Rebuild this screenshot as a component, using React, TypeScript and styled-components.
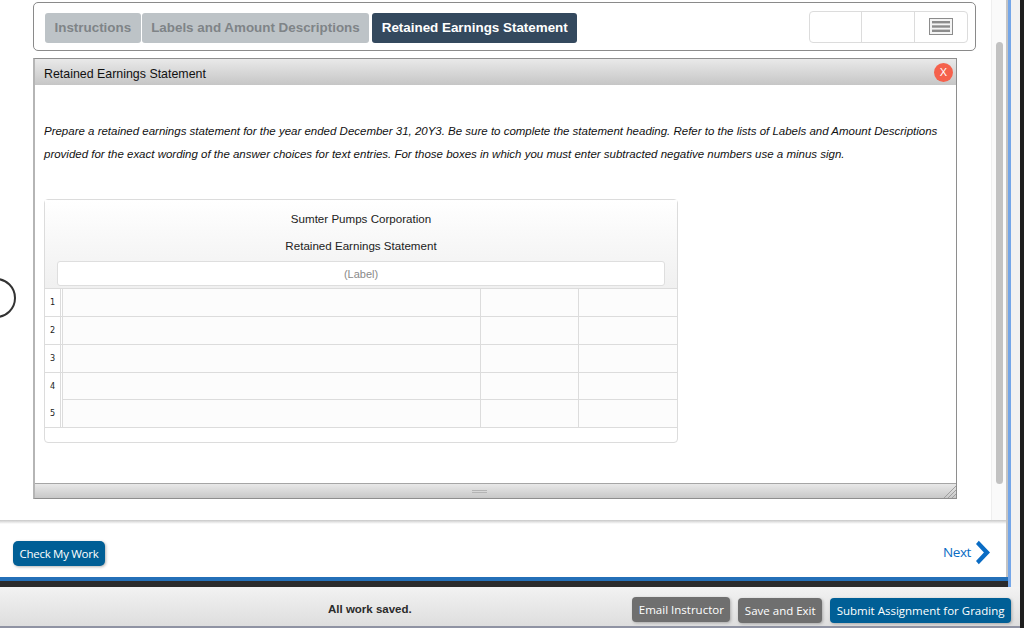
import styled, { createGlobalStyle } from 'styled-components';

const GlobalStyle = createGlobalStyle`
  html, body {
    margin: 0;
    padding: 0;
    overflow: hidden;
    background: #1e1e1e;
  }
  * {
    box-sizing: border-box;
  }
`;

const Page = styled.div`
  position: relative;
  display: flex;
  width: 1024px;
  height: 628px;
  overflow: hidden;
  background: #1e1e1e;
  font-family: 'Liberation Sans', Arial, sans-serif;
`;

const Frame = styled.div`
  display: flex;
  flex-direction: column;
  width: 1020px;
  height: 628px;
  background: #f1f1f1;
`;

const Shell = styled.div`
  display: flex;
  flex-direction: column;
  width: 1011px;
  height: 587px;
  border-right: 3px solid #74a6e8;
  background: #fff;
`;

const Main = styled.div`
  display: flex;
  height: 520px;
  border-right: 2px solid #c4c4c4;
`;

const Content = styled.div`
  width: 991px;
  padding: 2px 15px 0 33px;
`;

const Track = styled.div`
  width: 15px;
  padding: 42px 3px 36px 4px;
  background: #fafafa;
  border-left: 1px solid #efefef;
`;

const Thumb = styled.div`
  height: 442px;
  border-radius: 4px;
  background: #c2c2c2;
`;

const TabPanel = styled.div`
  display: flex;
  align-items: center;
  justify-content: space-between;
  height: 49px;
  padding: 0 7px 0 11px;
  border: 1px solid #8a8a8a;
  border-radius: 5px;
`;

const Tabs = styled.div`
  display: flex;
  gap: 1px;
  margin-top: 2px;
`;

const Tab = styled.div<{ $active?: boolean }>`
  height: 30px;
  padding: 0 9.5px;
  border-radius: 3px;
  background: ${(p) => (p.$active ? '#34495e' : '#bdc3c7')};
  color: ${(p) => (p.$active ? '#fff' : '#7f8487')};
  font-size: 13.4px;
  font-weight: 700;
  line-height: 30px;
  margin-left: ${(p) => (p.$active ? '2px' : '0')};
`;

const ToolGroup = styled.div`
  display: grid;
  grid-template-columns: 52px 53px 1fr;
  width: 159px;
  height: 32px;
  border: 1px solid #dcdcdc;
  border-radius: 4px;
`;

const ToolCell = styled.div<{ $last?: boolean }>`
  display: flex;
  align-items: center;
  justify-content: center;
  border-right: ${(p) => (p.$last ? 'none' : '1px solid #dcdcdc')};
`;

const Window = styled.div`
  display: flex;
  flex-direction: column;
  width: 924px;
  height: 441px;
  margin-top: 7px;
  border: 1px solid #8e8e8e;
  border-left-width: 2px;
  border-left-color: #b5b5b5;
`;

const TitleBar = styled.div`
  display: flex;
  align-items: center;
  justify-content: space-between;
  height: 26px;
  padding: 4px 3px 0 9px;
  background: linear-gradient(#e9e9e9, #c6c6c6);
  font-size: 12.4px;
  color: #111;
`;

const CloseButton = styled.div`
  width: 19px;
  height: 19px;
  margin-top: -4px;
  border-radius: 50%;
  background: #f5614c;
  color: #fff;
  font-size: 11px;
  line-height: 19px;
  text-align: center;
`;

const WindowBody = styled.div`
  flex: 1;
  padding: 35px 9px 0;
`;

const Instructions = styled.p`
  margin: 0;
  font-size: 11.49px;
  font-style: italic;
  line-height: 23px;
  color: #111;
`;

const Card = styled.div`
  width: 634px;
  height: 244px;
  margin-top: 33px;
  border: 1px solid #dcdcdc;
  border-radius: 4px;
`;

const CardHead = styled.div`
  height: 88px;
  padding: 6px 12px 0;
  background: linear-gradient(#fff, #f0f0f0);
  text-align: center;
`;

const HeadLine = styled.div`
  height: 27px;
  font-size: 11.58px;
  line-height: 26px;
  color: #222;
`;

const LabelBox = styled.div`
  height: 25px;
  margin-top: 1px;
  border: 1px solid #dedede;
  border-radius: 3px;
  background: #fff;
  color: #8a8a8a;
  font-size: 11px;
  line-height: 24px;
`;

const Row = styled.div<{ $short?: boolean }>`
  display: grid;
  grid-template-columns: 15px 3px 418px 98px 1fr;
  height: ${(p) => (p.$short ? '27px' : '28px')};
  border-top: 1px solid #dcdcdc;
  background: #fcfcfc;
`;

const RowNumber = styled.div`
  padding-left: 5px;
  font-family: 'DejaVu Sans', sans-serif;
  font-size: 9px;
  font-stretch: condensed;
  line-height: 27px;
  color: #222;
  background: #fff;
`;

const Gutter = styled.div`
  border-left: 1px solid #dcdcdc;
  border-right: 1px solid #dcdcdc;
  background: #fff;
`;

const Cell = styled.div`
  border-right: 1px solid #dcdcdc;

  &:last-child {
    border-right: none;
  }
`;

const CardFoot = styled.div`
  border-top: 1px solid #dcdcdc;
`;

const StatusBar = styled.div`
  position: relative;
  display: flex;
  align-items: center;
  height: 15px;
  margin-top: auto;
  padding-left: 437px;
  border-top: 1px solid #a5a5a5;
  background: linear-gradient(#e8e8e8, #c8c8c8);
`;

const Grip = styled.div`
  width: 15px;
  height: 3px;
  border-top: 1px solid #b4b4b4;
  border-bottom: 1px solid #b4b4b4;
`;

const ResizeCorner = styled.svg`
  position: absolute;
  right: 0;
  bottom: 0;
`;

const NavBar = styled.div`
  display: flex;
  align-items: center;
  justify-content: space-between;
  height: 57px;
  padding: 3px 16px 0 13px;
  border-right: 2px solid #c4c4c4;
  background: linear-gradient(#c8c8c8, #fff 4px);
`;

const CheckButton = styled.div`
  width: 92px;
  height: 25px;
  margin-top: 6px;
  border-radius: 5px;
  background: #005f96;
  box-shadow: 1px 1px 3px rgba(0, 0, 0, 0.3);
  color: #fff;
  font-family: 'Open Sans', sans-serif;
  font-size: 11.5px;
  letter-spacing: -0.3px;
  line-height: 25px;
  text-align: center;
`;

const NextLink = styled.div`
  display: flex;
  align-items: center;
  gap: 5px;
  margin-top: 4px;
  color: #0a6cc4;
  font-family: 'Open Sans', sans-serif;
  font-size: 13.5px;
  letter-spacing: -0.4px;
`;

const BlueStrip = styled.div`
  height: 4px;
  background: #2470b8;
`;

const DarkStrip = styled.div`
  height: 6px;
  background: #2b2b2b;
`;

const Footer = styled.div`
  display: flex;
  align-items: center;
  height: 41px;
  padding: 2px 9px 0 328px;
  border-bottom: 2px solid #8f93a3;
  background: linear-gradient(#f2f2f2, #dedede);
`;

const SavedText = styled.div`
  flex: 1;
  margin-top: 2px;
  font-size: 11.5px;
  font-weight: 700;
  color: #2b2b2b;
`;

const FootButton = styled.div<{ $primary?: boolean; $raised?: boolean }>`
  height: 25px;
  margin-top: ${(p) => (p.$raised ? '4px' : '6px')};
  margin-left: 8px;
  padding: 0 6.5px;
  border-radius: 4px;
  background: ${(p) => (p.$primary ? '#005f96' : '#6f6f6f')};
  box-shadow: 1px 1px 3px rgba(0, 0, 0, 0.25);
  color: #fff;
  font-family: 'Open Sans', sans-serif;
  font-size: 11.5px;
  line-height: 25px;
`;

const LoadingRing = styled.div`
  position: absolute;
  left: -24px;
  top: 278px;
  width: 40px;
  height: 40px;
  border: 2px solid #333;
  border-radius: 50%;
`;

const rows = [1, 2, 3, 4, 5];

const App = () => {
  return (
    <Page>
      <GlobalStyle />
      <Frame>
        <Shell>
          <Main>
            <Content>
              <TabPanel>
                <Tabs>
                  <Tab>Instructions</Tab>
                  <Tab>Labels and Amount Descriptions</Tab>
                  <Tab $active>Retained Earnings Statement</Tab>
                </Tabs>
                <ToolGroup>
                  <ToolCell />
                  <ToolCell />
                  <ToolCell $last>
                    <svg width="24" height="17" viewBox="0 0 24 17">
                      <rect x="0.5" y="0.5" width="23" height="16" fill="#f4f4f4" stroke="#8c8c8c" />
                      <rect x="3" y="3" width="18" height="2.4" fill="#8c8c8c" />
                      <rect x="3" y="7.3" width="18" height="2.4" fill="#8c8c8c" />
                      <rect x="3" y="11.6" width="18" height="2.4" fill="#8c8c8c" />
                    </svg>
                  </ToolCell>
                </ToolGroup>
              </TabPanel>
              <Window>
                <TitleBar>
                  Retained Earnings Statement
                  <CloseButton>X</CloseButton>
                </TitleBar>
                <WindowBody>
                  <Instructions>
                    Prepare a retained earnings statement for the year ended December 31, 20Y3. Be sure to complete the statement heading. Refer to the lists of Labels and Amount Descriptions
                    <br />
                    provided for the exact wording of the answer choices for text entries. For those boxes in which you must enter subtracted negative numbers use a minus sign.
                  </Instructions>
                  <Card>
                    <CardHead>
                      <HeadLine>Sumter Pumps Corporation</HeadLine>
                      <HeadLine>Retained Earnings Statement</HeadLine>
                      <LabelBox>(Label)</LabelBox>
                    </CardHead>
                    {rows.map((n) => (
                      <Row key={n} $short={n === 4}>
                        <RowNumber>{n}</RowNumber>
                        <Gutter />
                        <Cell />
                        <Cell />
                        <Cell />
                      </Row>
                    ))}
                    <CardFoot />
                  </Card>
                </WindowBody>
                <StatusBar>
                  <Grip />
                  <ResizeCorner width="12" height="12" viewBox="0 0 12 12">
                    <path d="M0 12L12 0M4 12L12 4M8 12L12 8" stroke="#a0a0a0" fill="none" />
                  </ResizeCorner>
                </StatusBar>
              </Window>
            </Content>
            <Track>
              <Thumb />
            </Track>
          </Main>
          <NavBar>
            <CheckButton>Check My Work</CheckButton>
            <NextLink>
              Next
              <svg width="14" height="25" viewBox="0 0 15 25">
                <path d="M3 0L15 12.5L3 25L0 21.5L8.5 12.5L0 3.5Z" fill="#0a6cc4" />
              </svg>
            </NextLink>
          </NavBar>
          <BlueStrip />
          <DarkStrip />
        </Shell>
        <Footer>
          <SavedText>All work saved.</SavedText>
          <FootButton $raised>Email Instructor</FootButton>
          <FootButton>Save and Exit</FootButton>
          <FootButton $primary>Submit Assignment for Grading</FootButton>
        </Footer>
      </Frame>
      <LoadingRing />
    </Page>
  );
};

export default App;
